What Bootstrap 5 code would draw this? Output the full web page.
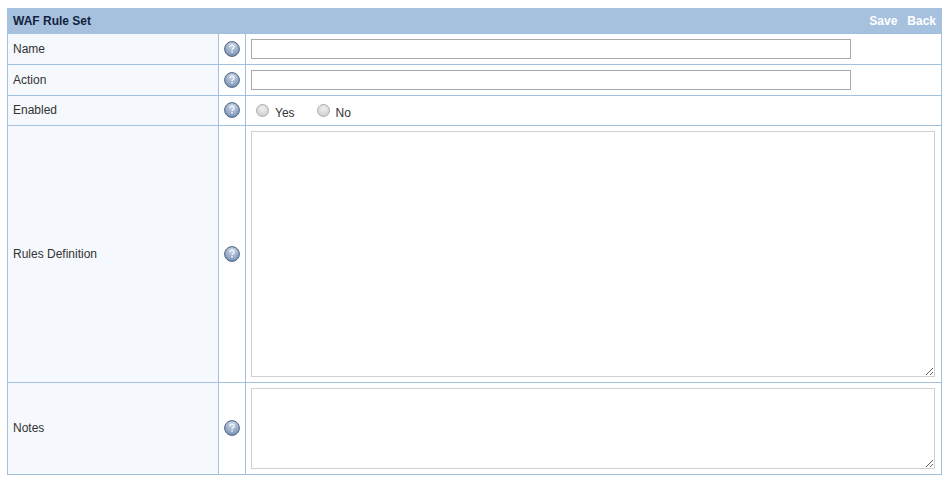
<!DOCTYPE html>
<html lang="en">
<head>
<meta charset="utf-8">
<title>WAF Rule Set</title>
<link href="https://cdn.jsdelivr.net/npm/bootstrap@5.3.0/dist/css/bootstrap.min.css" rel="stylesheet">
<style>
body { background:#fff; font-family:"Liberation Sans",Arial,sans-serif; font-size:12px; color:#333; }
.wrap { padding:8px 4px 0 7px; }
.waf-table { width:935px; border-collapse:collapse; table-layout:fixed; margin:0; }
.waf-table td { border:1px solid #a3c1de; padding:0; vertical-align:middle; }
.waf-head td { background:#a6c1de; height:25px; border-color:#a6c1de; border-bottom-color:#a3c1de; padding:0 5px; font-weight:700; }
.waf-title { color:#12233f; }
.waf-link { color:#fff; text-decoration:none; font-weight:700; }
.save-link { margin-right:2px; }
.waf-label { background:#f5f8fc; padding:0 5px !important; line-height:14px; }
.lift { padding-bottom:2px !important; }
.waf-help { text-align:center; }
.waf-help svg { display:block; margin:0 auto; }
.lift-icon { padding-bottom:1px !important; }
.waf-field { padding:5px !important; }
.waf-input { display:block; width:600px; height:20px; padding:0 2px; border:1px solid #a9a9a9; background:#fff; border-radius:0; font-size:12px; }
.waf-area { display:block; width:684px; border:1px solid #d0d0d0; background:#fff; padding:2px; border-radius:0; font-size:12px; margin:0; }
.waf-input:focus,.waf-area:focus { outline:none; }
.area-a { height:246px; }
.area-b { height:81px; }
.row-a { height:31px; }
.row-b { height:30px; }
.row-c { height:257px; }
.row-d { height:92px; }
.waf-radio { appearance:none; -webkit-appearance:none; width:13px; height:13px; margin:0 6px 0 0; border:1px solid #aeaeae; border-radius:50%; background:radial-gradient(circle at 50% 35%,#f0f0f0 0%,#d8d8d8 60%,#c2c2c2 100%); flex:none; position:relative; top:-1px; }
.radio-set { gap:22px; height:19px; padding-top:1px; }
.radio-item { display:flex; align-items:center; }
.radio-item label { margin:0; line-height:14px; position:relative; top:2px; }
.radio-cell { padding:0 5px 0 10px !important; }
</style>
</head>
<body>
<svg width="0" height="0" class="d-block position-absolute">
  <defs>
    <radialGradient id="hg" cx="50%" cy="25%" r="80%">
      <stop offset="0" stop-color="#cdd8e6"/>
      <stop offset="0.55" stop-color="#9cb0ca"/>
      <stop offset="1" stop-color="#6f89ac"/>
    </radialGradient>
    <symbol id="help" viewBox="0 0 16 16">
      <circle cx="8" cy="8" r="7.4" fill="url(#hg)" stroke="#4f6482" stroke-width="1"/>
      <path d="M5.9 6.2C6 4.9 6.9 4.3 8 4.3c1.2 0 2.1.7 2.1 1.7 0 .8-.5 1.2-1.1 1.6-.6.4-.9.7-.9 1.4" fill="none" stroke="#eef3f9" stroke-width="1.4"/>
      <rect x="7.3" y="10" width="1.5" height="1.6" fill="#eef3f9"/>
    </symbol>
  </defs>
</svg>
<div class="wrap">
<table class="waf-table">
  <colgroup><col style="width:211px"><col style="width:27px"><col></colgroup>
  <tr class="waf-head">
    <td colspan="3">
      <div class="d-flex justify-content-between align-items-center">
        <span class="waf-title">WAF Rule Set</span>
        <span class="d-flex gap-2"><a class="waf-link save-link" href="#">Save</a><a class="waf-link" href="#">Back</a></span>
      </div>
    </td>
  </tr>
  <tr class="row-a">
    <td class="waf-label">Name</td>
    <td class="waf-help"><svg width="16" height="16"><use href="#help"/></svg></td>
    <td class="waf-field"><input class="waf-input" type="text" aria-label="Name"></td>
  </tr>
  <tr class="row-a">
    <td class="waf-label">Action</td>
    <td class="waf-help"><svg width="16" height="16"><use href="#help"/></svg></td>
    <td class="waf-field"><input class="waf-input" type="text" aria-label="Action"></td>
  </tr>
  <tr class="row-b">
    <td class="waf-label lift">Enabled</td>
    <td class="waf-help lift-icon"><svg width="16" height="16"><use href="#help"/></svg></td>
    <td class="radio-cell">
      <div class="d-flex align-items-center radio-set">
        <div class="radio-item"><input class="waf-radio" type="radio" name="en" id="ry"><label for="ry">Yes</label></div>
        <div class="radio-item"><input class="waf-radio" type="radio" name="en" id="rn"><label for="rn">No</label></div>
      </div>
    </td>
  </tr>
  <tr class="row-c">
    <td class="waf-label">Rules Definition</td>
    <td class="waf-help"><svg width="16" height="16"><use href="#help"/></svg></td>
    <td class="waf-field"><textarea class="waf-area area-a" aria-label="Rules Definition"></textarea></td>
  </tr>
  <tr class="row-d">
    <td class="waf-label lift">Notes</td>
    <td class="waf-help lift-icon"><svg width="16" height="16"><use href="#help"/></svg></td>
    <td class="waf-field"><textarea class="waf-area area-b" aria-label="Notes"></textarea></td>
  </tr>
</table>
</div>
</body>
</html>
